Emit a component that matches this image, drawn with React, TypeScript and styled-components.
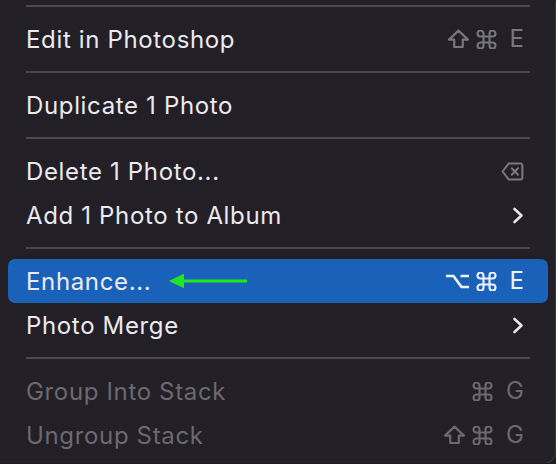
import styled, { createGlobalStyle } from "styled-components";

const GlobalStyle = createGlobalStyle`
  html, body {
    margin: 0;
    padding: 0;
    background: #1d1c20;
  }
  body {
    font-family: Inter, "Liberation Sans", sans-serif;
  }
`;

const Menu = styled.div`
  width: 555px;
  height: 463px;
  box-sizing: border-box;
  padding: 5px 7px 0 8px;
  background: #221f26;
  border-bottom-right-radius: 12px;
  box-shadow: 1px 1px 0 #38363c;
  overflow: hidden;
`;

const Separator = styled.div<{ $first?: boolean }>`
  height: 2px;
  margin: ${(p) => (p.$first ? "0 18px 10px" : "10px 18px")};
  background: #4a484e;
`;

const Row = styled.div<{ $active?: boolean }>`
  height: 44px;
  display: flex;
  align-items: center;
  padding: 0 24px 0 18px;
  border-radius: 7px;
  background: ${(p) => (p.$active ? "#1a62b9" : "transparent")};
`;

const Label = styled.span<{ $disabled?: boolean }>`
  font-size: 24px;
  letter-spacing: 0.65px;
  color: ${(p) => (p.$disabled ? "#6b696f" : "#ebeaef")};
  white-space: nowrap;
`;

const Right = styled.div<{ $tone: string }>`
  margin-left: auto;
  display: flex;
  align-items: center;
  gap: 6px;
  color: ${(p) => p.$tone};
`;

const Key = styled.span`
  font-size: 24px;
  margin-left: 7px;
  line-height: 1;
`;

const Pointer = styled.svg`
  margin-left: 18px;
  display: block;
`;

const ShiftGlyph = () => (
  <svg width="23" height="20" viewBox="0 0 23 20">
    <path
      d="M11.5 1.6 L21 10.6 H15.8 V18 H7.2 V10.6 H2 Z"
      fill="none"
      stroke="currentColor"
      strokeWidth="2.2"
      strokeLinejoin="round"
    />
  </svg>
);

const CmdGlyph = () => (
  <svg width="21" height="19" viewBox="2.2 2.5 19.6 19">
    <path
      d="M15 6v12a3 3 0 1 0 3-3H6a3 3 0 1 0 3 3V6a3 3 0 1 0-3 3h12a3 3 0 1 0-3-3"
      fill="none"
      stroke="currentColor"
      strokeWidth="2.1"
      strokeLinecap="round"
      strokeLinejoin="round"
    />
  </svg>
);

const OptGlyph = () => (
  <svg width="25" height="18" viewBox="0 0 25 18">
    <path
      d="M1 4 H8.5 L16.5 15 H24 M15.5 4 H24"
      fill="none"
      stroke="currentColor"
      strokeWidth="2.6"
    />
  </svg>
);

const DeleteGlyph = () => (
  <svg width="23" height="19" viewBox="0 0 23 19">
    <path
      d="M7.6 1.6 H19.4 a2 2 0 0 1 2 2 V15.4 a2 2 0 0 1-2 2 H7.6 L1.6 9.5 Z"
      fill="none"
      stroke="currentColor"
      strokeWidth="2"
      strokeLinejoin="round"
    />
    <path
      d="M10.8 6.2 L17 12.8 M17 6.2 L10.8 12.8"
      stroke="currentColor"
      strokeWidth="2"
      strokeLinecap="round"
    />
  </svg>
);

const Chevron = () => (
  <svg width="12" height="17" viewBox="0 0 12 17">
    <path
      d="M2.5 2 L9.5 8.5 L2.5 15"
      fill="none"
      stroke="currentColor"
      strokeWidth="2.6"
      strokeLinecap="round"
      strokeLinejoin="round"
    />
  </svg>
);

const App = () => {
  return (
    <>
      <GlobalStyle />
      <Menu>
        <Separator $first />
        <Row>
          <Label>Edit in Photoshop</Label>
          <Right $tone="#77767c">
            <ShiftGlyph />
            <CmdGlyph />
            <Key>E</Key>
          </Right>
        </Row>
        <Separator />
        <Row>
          <Label>Duplicate 1 Photo</Label>
        </Row>
        <Separator />
        <Row>
          <Label>Delete 1 Photo...</Label>
          <Right $tone="#7a797e">
            <DeleteGlyph />
          </Right>
        </Row>
        <Row>
          <Label>Add 1 Photo to Album</Label>
          <Right $tone="#e6e5ea">
            <Chevron />
          </Right>
        </Row>
        <Separator />
        <Row $active>
          <Label>Enhance...</Label>
          <Pointer width="80" height="16" viewBox="0 0 80 16">
            <path d="M13 6.6 H78 V9.4 H13 Z" fill="#1fe61f" />
            <path d="M0 8 L15 0.8 L15 15.2 Z" fill="#1fe61f" />
          </Pointer>
          <Right $tone="#eef3fb">
            <OptGlyph />
            <CmdGlyph />
            <Key>E</Key>
          </Right>
        </Row>
        <Row>
          <Label>Photo Merge</Label>
          <Right $tone="#e6e5ea">
            <Chevron />
          </Right>
        </Row>
        <Separator />
        <Row>
          <Label $disabled>Group Into Stack</Label>
          <Right $tone="#6b696f">
            <CmdGlyph />
            <Key>G</Key>
          </Right>
        </Row>
        <Row>
          <Label $disabled>Ungroup Stack</Label>
          <Right $tone="#6b696f">
            <ShiftGlyph />
            <CmdGlyph />
            <Key>G</Key>
          </Right>
        </Row>
      </Menu>
    </>
  );
};

export default App;
